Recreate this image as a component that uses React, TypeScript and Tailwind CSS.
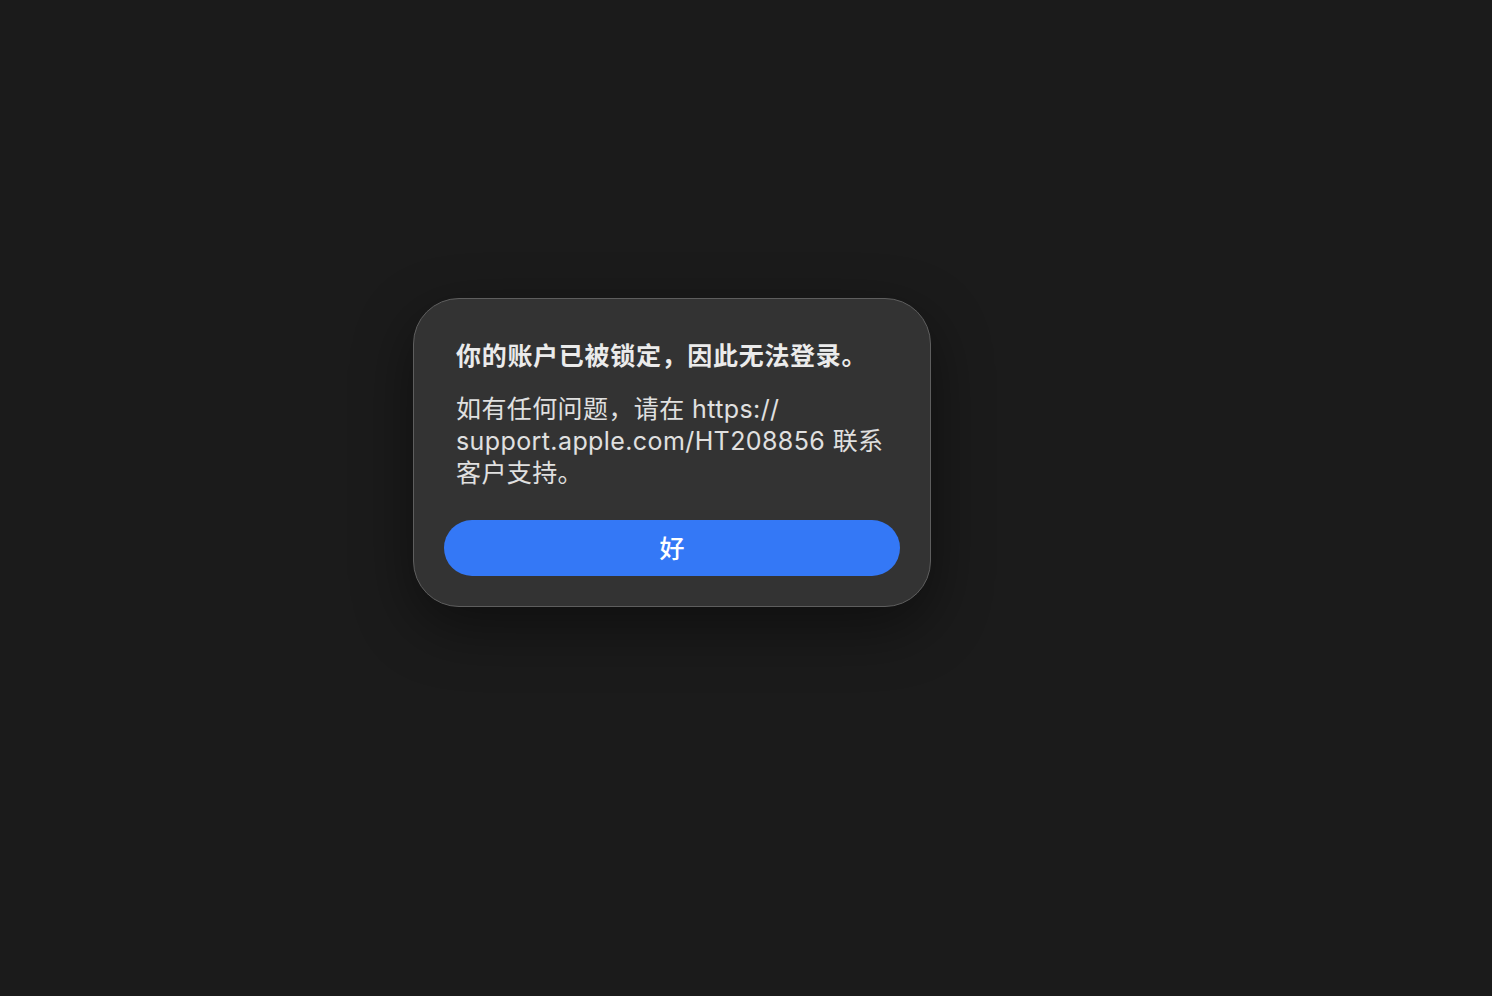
import React from "react";

export default function App() {
  const font = {
    fontFamily:
      '"Inter", "Noto Sans CJK SC", "Noto Sans", sans-serif',
  };
  return (
    <div
      className="w-[1492px] h-[996px] bg-[#1b1b1b] pt-[298px] pl-[413px] overflow-hidden"
      style={font}
    >
      <div className="w-[518px] h-[309px] rounded-[46px] border border-[#5e5e5e] bg-[#333333] shadow-[0_20px_60px_rgba(0,0,0,0.45)] px-[30px] pt-[41px] pb-[30px] flex flex-col">
        <div className="px-[12px] text-[25px] leading-[32px] font-bold text-[#ebebeb] tracking-[0.7px] whitespace-nowrap">
          你的账户已被锁定，因此无法登录。
        </div>
        <div className="px-[12px] mt-[21px] text-[25px] leading-[32px] text-[#e0e0e0] tracking-[0.4px] whitespace-nowrap">
          如有任何问题，请在 https://
          <br />
          support.apple.com/HT208856 联系
          <br />
          客户支持。
        </div>
        <button className="mt-[31px] h-[56px] w-full rounded-full bg-[#3478f6] text-white text-[25px] font-medium flex items-center justify-center pt-[3px]">
          好
        </button>
      </div>
    </div>
  );
}
